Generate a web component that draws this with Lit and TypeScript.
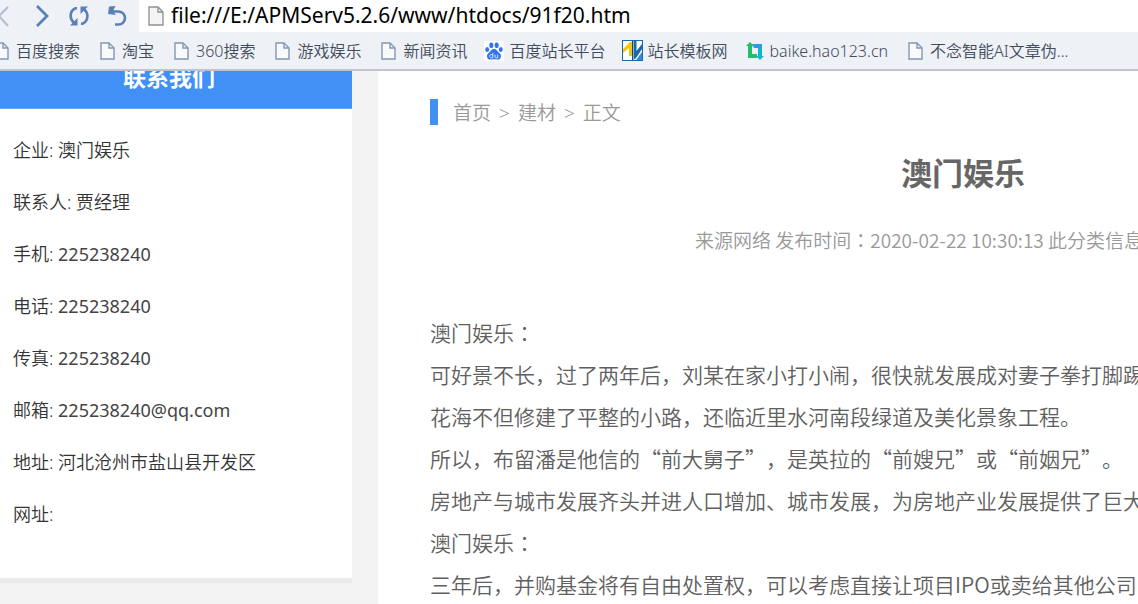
import { LitElement, html, css } from "lit";
import { customElement } from "lit/decorators.js";

const pageIcon = html`<svg width="15" height="18" viewBox="0 0 15 18" aria-hidden="true">
  <path d="M1 1h8l5 5v11H1z" fill="#f7f9fc" stroke="#8398b4" stroke-width="1.4" />
  <path d="M9 1v5h5" fill="none" stroke="#8398b4" stroke-width="1.4" />
</svg>`;

const pawIcon = html`<svg width="20" height="20" viewBox="0 0 20 20" aria-hidden="true">
  <rect width="20" height="20" fill="#fafcff" />
  <g fill="#2f74ee">
    <ellipse cx="7.3" cy="4.2" rx="2" ry="2.8" />
    <ellipse cx="12.7" cy="4.2" rx="2" ry="2.8" />
    <ellipse cx="3.2" cy="8.6" rx="1.9" ry="2.5" />
    <ellipse cx="16.8" cy="8.6" rx="1.9" ry="2.5" />
    <path d="M10 8c2.600 0 3.200 2.200 4.800 3.600 2.200 1.800 2.600 3.400 1.800 5.200-.8 1.900-2.700 1.900-4 1.700-1.800-.3-3.400-.3-5.200 0-1.300.2-3.200.2-4-1.700-.8-1.800-.4-3.400 1.800-5.200C6.800 10.200 7.400 8 10 8z" />
  </g>
  <path d="M8.800 11.800v5H7.200c-2.200 0-2.200-3.200 0-3.200h1.600M11 13.600v2.200c0 .7.400 1 1 1h1.700v-3.200" fill="none" stroke="#dce9ff" stroke-width="1" />
</svg>`;

const templateIcon = html`<svg width="21" height="21" viewBox="0 0 21 21" aria-hidden="true">
  <rect x=".5" y=".5" width="20" height="20" fill="#fff" stroke="#1768ae" />
  <path d="M1 9 8 2h2v14H7V8l-6 5z" fill="#f3c613" />
  <path d="M11.500 1h3v10l5.500-7v5l-6 9-2.500 2z" fill="#1768ae" />
  <path d="M10.500 1v19" stroke="#23485c" stroke-width="1" />
  <path d="M14 20l6-8v8z" fill="#3c8ac8" />
</svg>`;

const baikeIcon = html`<svg width="18" height="18" viewBox="0 0 18 18" aria-hidden="true">
  <path d="M4 0 8 4H6v8h5v4H2V4H0z" fill="#25bd6a" />
  <path d="M6 2h10v12h2l-4 4-4-4h2V6H8z" fill="#12b5c9" />
  <path d="M8 2h8v5h-4V6H8z" fill="#2a9be8" />
</svg>`;

const bookmarks = [
  { icon: pageIcon, label: "百度搜索" },
  { icon: pageIcon, label: "淘宝" },
  { icon: pageIcon, label: "360搜索" },
  { icon: pageIcon, label: "游戏娱乐" },
  { icon: pageIcon, label: "新闻资讯" },
  { icon: pawIcon, label: "百度站长平台" },
  { icon: templateIcon, label: "站长模板网" },
  { icon: baikeIcon, label: "baike.hao123.cn" },
  { icon: pageIcon, label: "不念智能AI文章伪..." },
];

const contacts = [
  { label: "企业", value: "澳门娱乐" },
  { label: "联系人", value: "贾经理" },
  { label: "手机", value: "225238240", latin: true },
  { label: "电话", value: "225238240", latin: true },
  { label: "传真", value: "225238240", latin: true },
  { label: "邮箱", value: "225238240@qq.com", latin: true },
  { label: "地址", value: "河北沧州市盐山县开发区" },
  { label: "网址", value: "" },
];

const colon = html`<span class="colon" lang="zh-TW">：</span>`;

const paragraphs = [
  html`澳门娱乐${colon}`,
  "可好景不长，过了两年后，刘某在家小打小闹，很快就发展成对妻子拳打脚踢",
  "花海不但修建了平整的小路，还临近里水河南段绿道及美化景象工程。",
  "所以，布留潘是他信的“前大舅子”，是英拉的“前嫂兄”或“前姻兄”。",
  "房地产与城市发展齐头并进人口增加、城市发展，为房地产业发展提供了巨大",
  html`澳门娱乐${colon}`,
  "三年后，并购基金将有自由处置权，可以考虑直接让项目IPO或卖给其他公司",
];

@customElement("browser-chrome")
export class BrowserChrome extends LitElement {
  static styles = css`
    :host {
      display: block;
      background: #eef1f5;
      border-bottom: 2px solid #c1c4cd;
    }
    .toolbar {
      display: flex;
      height: 32px;
    }
    .buttons {
      display: flex;
      flex: none;
      align-items: center;
      gap: 18px;
      width: 139px;
      margin-left: -10px;
    }
    .tool {
      display: flex;
      padding: 0;
      border: 0;
      background: none;
    }
    .address {
      display: flex;
      flex: 1;
      align-items: center;
      gap: 7px;
      padding-left: 9px;
      margin-left: 10px;
      background: #fff;
    }
    .url {
      flex: 1;
      min-width: 0;
      height: 32px;
      padding: 0 0 2px;
      box-sizing: border-box;
      border: 0;
      outline: 0;
      background: none;
      color: #000;
      font: 21px "Noto Sans", "Noto Sans CJK SC", sans-serif;
    }
    .bookmarks {
      display: flex;
      align-items: center;
      gap: 17px;
      height: 37px;
      margin-left: -9px;
      overflow: hidden;
    }
    .bookmark {
      display: flex;
      flex: none;
      align-items: center;
      gap: 5px;
      color: #414b5e;
      font: 350 16px/24px "Noto Sans", "Noto Sans CJK SC", sans-serif;
      text-decoration: none;
      white-space: nowrap;
    }
    .icon {
      display: flex;
      justify-content: center;
      width: 20px;
    }
    svg {
      display: block;
      flex: none;
    }
  `;

  render() {
    return html`
      <div class="toolbar">
        <div class="buttons">
          <button class="tool" aria-label="Back">
            <svg width="28" height="24" viewBox="0 0 28 24"><path d="M18 3 9 12l9 10" fill="none" stroke="#b3bfd2" stroke-width="2.200" /></svg>
          </button>
          <button class="tool" aria-label="Forward">
            <svg width="14" height="24" viewBox="0 0 14 24"><path d="M1 2l10 10L1 22" fill="none" stroke="#5b80b8" stroke-width="2.800" /></svg>
          </button>
          <button class="tool" aria-label="Reload">
            <svg width="22" height="22" viewBox="0 0 22 22">
              <path d="M9 3.200H7.500C3.500 5 2.600 8 2.600 11c0 3 1.400 5.200 4 7.500M13 18.800h1.500c4-1.800 4.900-4.800 4.900-7.800 0-3-1.400-5.200-4-7.500" fill="none" stroke="#5b80b8" stroke-width="2.600" />
              <path d="M2 20.500h7.500V13zM20 1.500h-7.500V9z" fill="#5b80b8" />
            </svg>
          </button>
          <button class="tool" aria-label="Undo">
            <svg width="20" height="22" viewBox="0 0 20 22">
              <path d="M3 6.500h7.500a6.500 6.500 0 0 1 0 13H7" fill="none" stroke="#5b80b8" stroke-width="2.600" />
              <path d="M7.500 1 1 1.500 0 9l8 1-3-4z" fill="#5b80b8" />
            </svg>
          </button>
        </div>
        <div class="address">
          <svg width="16" height="20" viewBox="0 0 16 20" aria-hidden="true">
            <path d="M1 1h9l5 5v13H1z" fill="#f4f4f4" stroke="#8e8e8e" stroke-width="1.300" />
            <path d="M10 1v5h5" fill="none" stroke="#8e8e8e" stroke-width="1.300" />
          </svg>
          <input class="url" aria-label="Address" .value=${"file:///E:/APMServ5.2.6/www/htdocs/91f20.htm"} />
        </div>
      </div>
      <nav class="bookmarks">
        ${bookmarks.map(
          (b) => html`<a class="bookmark" href="#"><span class="icon">${b.icon}</span>${b.label}</a>`
        )}
      </nav>
    `;
  }
}

@customElement("contact-card")
export class ContactCard extends LitElement {
  static styles = css`
    :host {
      display: block;
      background: #fff;
      border-bottom: 5px solid #ebebeb;
    }
    .heading {
      margin: 0;
      padding: 0 14px 27px 0;
      border-bottom: 1px solid #6aaaf8;
      background: #4090f5;
      color: #fff;
      font: 700 23px/10px "Noto Sans CJK SC", sans-serif;
      text-align: center;
    }
    .list {
      margin: 0;
      padding: 15px 13px 38px;
      list-style: none;
      color: #333;
      font: 350 18px/52px "Noto Sans", "Noto Sans CJK SC", sans-serif;
    }
    .row {
      min-height: 52px;
    }
    .latin {
      color: #444;
      font-weight: 400;
    }
  `;

  render() {
    return html`
      <h2 class="heading">联系我们</h2>
      <ul class="list">
        ${contacts.map(
          (c) => html`<li class="row">${c.label}: <span class=${c.latin ? "latin" : "text"}>${c.value}</span></li>`
        )}
      </ul>
    `;
  }
}

@customElement("news-article")
export class NewsArticle extends LitElement {
  static styles = css`
    :host {
      display: block;
      box-sizing: border-box;
      padding: 28px 52px 0;
      background: #fff;
      color: #666;
      font-family: "Noto Sans", "Noto Sans CJK SC", sans-serif;
      white-space: nowrap;
      text-spacing-trim: space-all;
    }
    .crumbs {
      display: flex;
      gap: 8px;
      padding: 2px 0 0 15px;
      border-left: 8px solid #4090f5;
      color: #999;
      font-weight: 350;
      font-size: 19px;
      line-height: 24px;
    }
    .crumb {
      color: inherit;
      text-decoration: none;
    }
    .title {
      margin: 26px 0 0;
      font-size: 31px;
      line-height: 44px;
      text-align: center;
    }
    .meta {
      margin: 31px 0 0;
      padding-left: 265px;
      color: #999;
      font: 350 19px/28px "Noto Sans CJK SC", sans-serif;
    }
    .body {
      padding-top: 57px;
      color: #606060;
      font: 350 21px/42px "Noto Sans CJK SC", sans-serif;
    }
    .para {
      margin: 0;
    }
    .colon {
      font-family: "Noto Sans CJK TC", sans-serif;
    }
  `;

  render() {
    return html`
      <nav class="crumbs">
        <a class="crumb" href="#">首页</a><span>&gt;</span>
        <a class="crumb" href="#">建材</a><span>&gt;</span>
        <span>正文</span>
      </nav>
      <h1 class="title">澳门娱乐</h1>
      <p class="meta">来源网络 发布时间${colon}2020-02-22 10:30:13 此分类信息</p>
      <div class="body">${paragraphs.map((p) => html`<p class="para" lang="zh-CN">${p}</p>`)}</div>
    `;
  }
}

@customElement("app-root")
export class AppRoot extends LitElement {
  static styles = css`
    :host {
      display: flex;
      flex-direction: column;
      height: 100vh;
      overflow: hidden;
      background: #f3f3f3;
    }
    .chrome {
      flex: none;
    }
    .viewport {
      display: flex;
      flex: 1;
      align-items: flex-start;
      gap: 26px;
      min-height: 0;
      overflow: hidden;
    }
    .side {
      flex: 0 0 352px;
    }
    .main {
      flex: 1 0 1170px;
      min-height: 100%;
    }
  `;

  render() {
    return html`
      <browser-chrome class="chrome"></browser-chrome>
      <div class="viewport">
        <contact-card class="side"></contact-card>
        <news-article class="main"></news-article>
      </div>
    `;
  }
}
